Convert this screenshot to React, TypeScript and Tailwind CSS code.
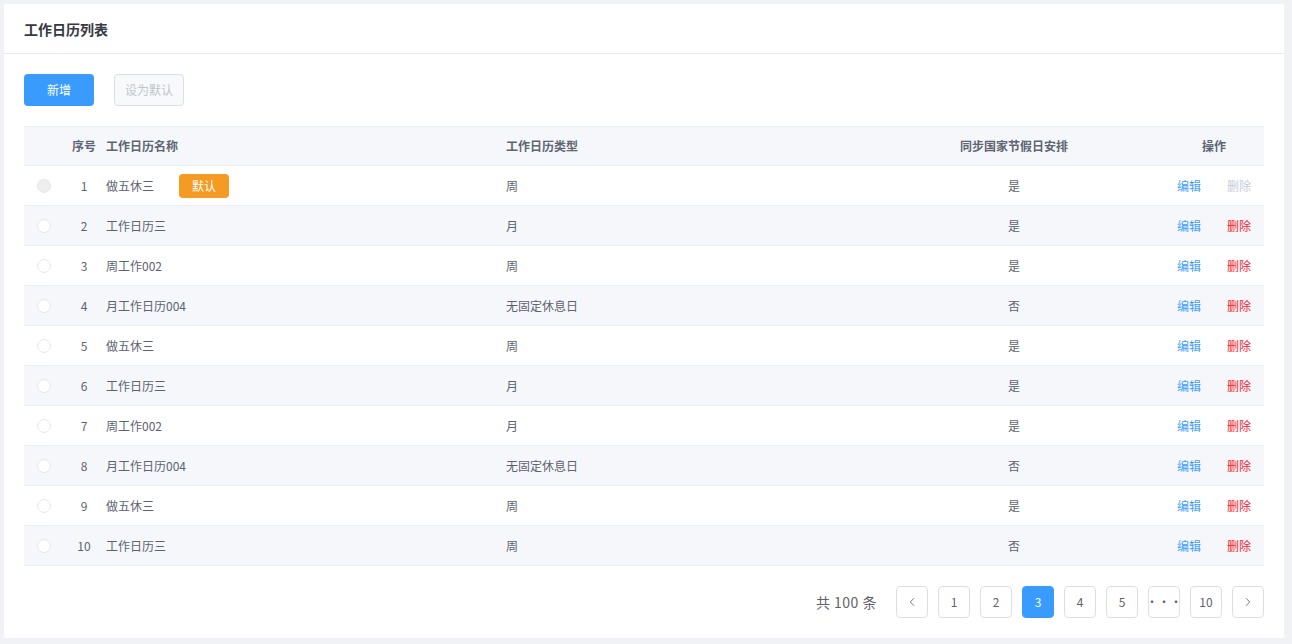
import { ChevronLeft, ChevronRight } from 'lucide-react';

const rows = [
  { id: 1, name: '做五休三', type: '周', sync: '是', isDefault: true },
  { id: 2, name: '工作日历三', type: '月', sync: '是' },
  { id: 3, name: '周工作002', type: '周', sync: '是' },
  { id: 4, name: '月工作日历004', type: '无固定休息日', sync: '否' },
  { id: 5, name: '做五休三', type: '周', sync: '是' },
  { id: 6, name: '工作日历三', type: '月', sync: '是' },
  { id: 7, name: '周工作002', type: '月', sync: '是' },
  { id: 8, name: '月工作日历004', type: '无固定休息日', sync: '否' },
  { id: 9, name: '做五休三', type: '周', sync: '是' },
  { id: 10, name: '工作日历三', type: '周', sync: '否' },
];

const pages = ['1', '2', '3', '4', '5', '···', '10'];

export default function App() {
  return (
    <div
      className="min-h-[644px] bg-[#f0f2f5] p-1 text-xs text-[#5c6370]"
      style={{ fontFamily: '"Noto Sans CJK SC", "Noto Sans", sans-serif' }}
    >
      <div className="h-[634px] w-[1280px] bg-white">
        <div className="flex h-[50px] items-center border-b border-[#e8eaee] px-5">
          <h1 className="text-sm font-bold text-[#363a42]">工作日历列表</h1>
        </div>

        <div className="px-5 pt-5">
          <div className="flex gap-5">
            <button className="h-8 w-[70px] rounded bg-[#3a9bff] text-white">新增</button>
            <button className="h-8 w-[70px] rounded border border-[#dcdfe6] bg-[#f8f9fa] text-[#c0c4cc]">
              设为默认
            </button>
          </div>

          <div className="mt-5 border-t border-[#ebeef5]">
            <div className="flex h-[39px] items-center border-b border-[#ebeef5] bg-[#f5f7fa] font-bold text-[#5d6573]">
              <div className="w-10" />
              <div className="w-10 text-center">序号</div>
              <div className="w-[400px] pl-[2px]">工作日历名称</div>
              <div className="w-[360px] pl-[2px]">工作日历类型</div>
              <div className="w-[300px] text-center">同步国家节假日安排</div>
              <div className="w-[100px] text-center">操作</div>
            </div>

            {rows.map((row, i) => (
              <div
                key={row.id}
                className={`flex h-10 items-center border-b border-[#ebeef5] ${i % 2 === 1 ? 'bg-[#f5f7fa]' : 'bg-white'}`}
              >
                <div className="flex w-10 justify-center">
                  <span
                    className={`h-[14px] w-[14px] rounded-full border border-[#e4e7ed] ${row.isDefault ? 'bg-[#edeef0]' : 'bg-white'}`}
                  />
                </div>
                <div className="w-10 text-center">{row.id}</div>
                <div className="flex w-[400px] items-center whitespace-nowrap pl-[2px]">
                  <span className="min-w-[73px]">{row.name}</span>
                  {row.isDefault && (
                    <span className="flex h-6 w-[50px] items-center justify-center rounded bg-[#f59a23] text-white">
                      默认
                    </span>
                  )}
                </div>
                <div className="w-[360px] pl-[2px]">{row.type}</div>
                <div className="w-[300px] text-center">{row.sync}</div>
                <div className="flex w-[100px] justify-center gap-[26px]">
                  <a className="cursor-pointer text-[#409eff]">编辑</a>
                  <a className={row.isDefault ? 'text-[#c5cddb]' : 'cursor-pointer text-[#f5222d]'}>删除</a>
                </div>
              </div>
            ))}
          </div>

          <div className="mt-5 flex items-center justify-end">
            <span className="mr-[19px] text-sm tracking-[0.5px] text-[#606266]">共 100 条</span>
            <div className="flex gap-[10px]">
              <button className="flex h-8 w-8 items-center justify-center rounded border border-[#dcdfe6] text-[#606266]">
                <ChevronLeft className="h-3.5 w-3.5" strokeWidth={1.5} />
              </button>
              {pages.map((p) => (
                <button
                  key={p}
                  className={`flex h-8 w-8 items-center justify-center rounded border text-xs ${
                    p === '3'
                      ? 'border-[#3a9bff] bg-[#3a9bff] text-white'
                      : 'border-[#dcdfe6] bg-white text-[#606266]'
                  }`}
                >
                  {p}
                </button>
              ))}
              <button className="flex h-8 w-8 items-center justify-center rounded border border-[#dcdfe6] text-[#606266]">
                <ChevronRight className="h-3.5 w-3.5" strokeWidth={1.5} />
              </button>
            </div>
          </div>
        </div>
      </div>
    </div>
  );
}
